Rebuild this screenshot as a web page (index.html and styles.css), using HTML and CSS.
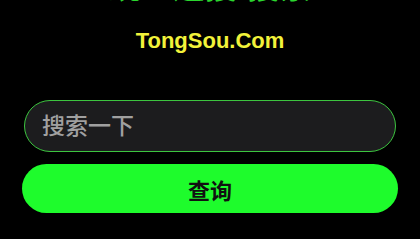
FILE: index.html
```html
<!DOCTYPE html>
<html lang="zh-CN">
<head>
    <meta charset="UTF-8">
    <meta name="viewport" content="width=device-width, initial-scale=1.0">
    <title>通搜</title>
    <link rel="stylesheet" href="styles.css">
</head>
<body>
    <div class="page">
        <h1 class="title">统一通搜·搜索</h1>
        <div class="site">TongSou.Com</div>

        <form class="search" onsubmit="return false;">
            <input class="search-input" type="text" placeholder="搜索一下">
            <button class="search-button" type="submit">查询</button>
        </form>
    </div>
</body>
</html>
```

FILE: styles.css
```css
/* Global settings */
:root {
    --color-bg: #000;
    --color-green: #1efc2c;
    --color-title: #2bd62f;
    --color-yellow: #f2f23a;
    --color-border: #3cc43f;
    --font-default: "Liberation Sans", "Noto Sans CJK SC", Arial, sans-serif;
}

body {
    margin: 0;
    background-color: var(--color-bg);
    font-family: var(--font-default);
}

.page {
    display: flex;
    flex-direction: column;
    align-items: center;
    padding: 0 22px;
}

/* Header */
.title {
    margin: -33px 0 0;
    color: var(--color-title);
    font-size: 32px;
    line-height: 40px;
    font-weight: bold;
}

.site {
    margin-top: 20px;
    color: var(--color-yellow);
    font-size: 22px;
    line-height: 28px;
    font-weight: bold;
}

/* Search form */
.search {
    display: flex;
    flex-direction: column;
    align-self: stretch;
    gap: 12px;
    margin-top: 45px;
}

.search-input {
    box-sizing: border-box;
    height: 52px;
    margin: 0 2px;
    padding: 0 17px;
    border: 1px solid var(--color-border);
    border-radius: 26px;
    background-color: #1c1c1e;
    color: #ddd;
    font-family: var(--font-default);
    font-size: 23px;
    font-weight: 500;
    outline: none;
}

.search-input::placeholder {
    color: #a0a0a0;
}

.search-button {
    height: 49px;
    border: 0;
    border-radius: 25px;
    background-color: var(--color-green);
    color: #111;
    font-family: var(--font-default);
    font-size: 22px;
    font-weight: bold;
    cursor: pointer;
}
```
